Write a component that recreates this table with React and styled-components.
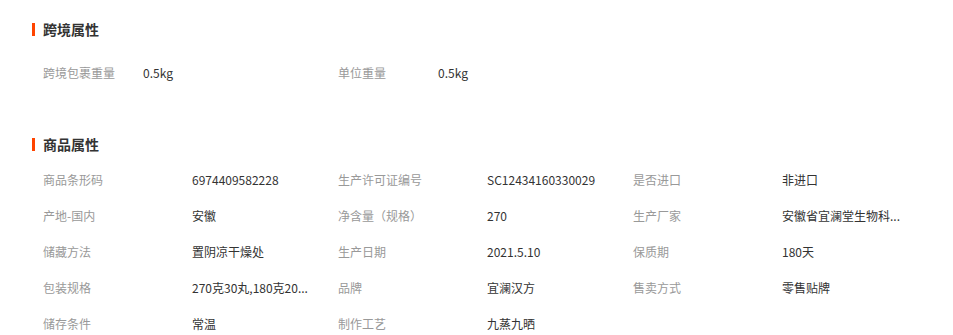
import styled, { createGlobalStyle } from "styled-components";

const GlobalStyle = createGlobalStyle`
  body {
    margin: 0;
    background: #fff;
    font-family: "Microsoft YaHei", "Noto Sans CJK SC", "Liberation Sans", sans-serif;
  }
`;

const Container = styled.div`
  padding: 19px 0 0 32px;
  width: 953px;
  box-sizing: border-box;
`;

const Section = styled.section`
  margin-top: ${(p) => p.gap || 0}px;
`;

const Title = styled.h3`
  display: flex;
  align-items: center;
  height: 20px;
  margin: 0 0 ${(p) => p.after}px 0;
  font-size: 14px;
  font-weight: bold;
  color: #333;

  &::before {
    content: "";
    width: 3px;
    height: 13px;
    background: #ff4400;
    margin-right: 8px;
  }
`;

const Grid = styled.div`
  display: grid;
  grid-template-columns: repeat(3, ${(p) => p.label}px ${(p) => 295 - p.label}px);
  grid-auto-rows: 36px;
  padding-left: 11px;
  align-items: center;
  font-size: 12px;
`;

const Label = styled.div`
  color: #999;
`;

const Value = styled.div`
  color: #333;
  white-space: nowrap;
`;

const crossBorder = [
  ["跨境包裹重量", "0.5kg"],
  ["单位重量", "0.5kg"],
];

// long values are shown shortened, full text in the tooltip
const product = [
  ["商品条形码", "6974409582228"],
  ["生产许可证编号", "SC12434160330029"],
  ["是否进口", "非进口"],
  ["产地-国内", "安徽"],
  ["净含量（规格）", "270"],
  ["生产厂家", "安徽省宜澜堂生物科...", "安徽省宜澜堂生物科技有限公司"],
  ["储藏方法", "置阴凉干燥处"],
  ["生产日期", "2021.5.10"],
  ["保质期", "180天"],
  ["包装规格", "270克30丸,180克20...", "270克30丸,180克20丸"],
  ["品牌", "宜澜汉方"],
  ["售卖方式", "零售贴牌"],
  ["储存条件", "常温"],
  ["制作工艺", "九蒸九晒"],
];

const Attrs = ({ items, label }) => (
  <Grid label={label}>
    {items.map(([k, v, full]) => [
      <Label key={k + "l"}>{k}</Label>,
      <Value key={k + "v"} title={full || v}>
        {v}
      </Value>,
    ])}
  </Grid>
);

const App = () => {
  return (
    <Container>
      <GlobalStyle />
      <Section>
        <Title after={15}>跨境属性</Title>
        <Attrs items={crossBorder} label={100} />
      </Section>
      <Section gap={44}>
        <Title after={7}>商品属性</Title>
        <Attrs items={product} label={149} />
      </Section>
    </Container>
  );
};

export default App;
